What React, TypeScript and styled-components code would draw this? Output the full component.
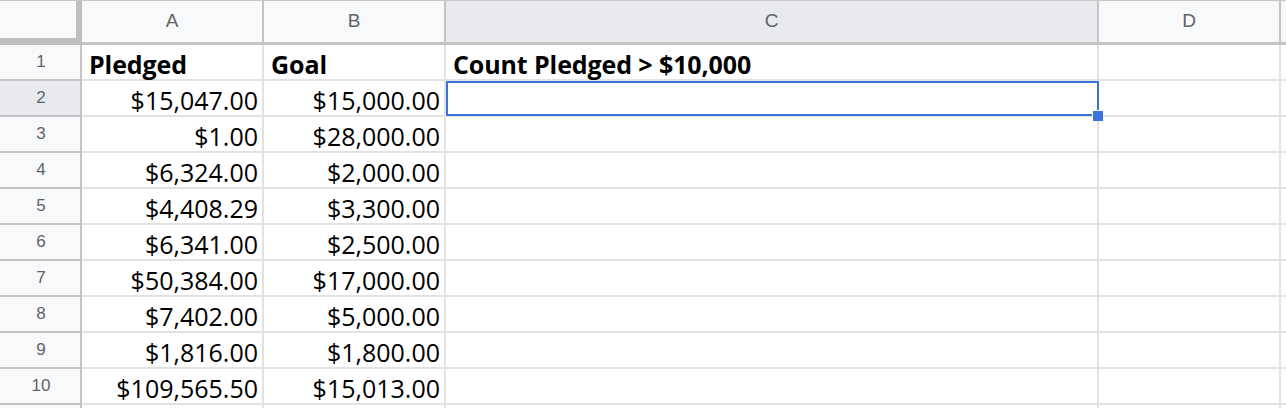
import React from "react";
import styled, { createGlobalStyle, css } from "styled-components";

const Global = createGlobalStyle`
  html, body { margin: 0; padding: 0; background: #ffffff; }
  body { width: 1286px; height: 408px; overflow: hidden; }
  * { box-sizing: border-box; }
`;

const Sheet = styled.div`
  display: grid;
  grid-template-columns: 82px 182px 182px 653px 182px 1fr;
  grid-template-rows: 44px repeat(11, 36px);
  width: 1286px;
  border-top: 1px solid #c4c7c5;
`;

const Corner = styled.div`
  background: #f8f9fa;
  border-right: 6px solid #bfbfbf;
  border-bottom: 7px solid #bfbfbf;
`;

const ColHeader = styled.div<{ $active?: boolean }>`
  display: flex;
  align-items: center;
  justify-content: center;
  padding-bottom: 1px;
  background: ${(p) => (p.$active ? "#e8eaed" : "#f8f9fa")};
  border-right: 2px solid #c4c4c4;
  border-bottom: 3px solid #c4c4c4;
  font-family: "Liberation Sans", Arial, sans-serif;
  font-size: 19px;
  color: #5f6368;
`;

const RowHeader = styled.div<{ $active?: boolean }>`
  display: flex;
  align-items: center;
  justify-content: center;
  background: ${(p) => (p.$active ? "#e8eaed" : "#f8f9fa")};
  border-right: 2px solid #c4c4c4;
  border-bottom: 2px solid #c4c4c4;
  font-family: "Liberation Sans", Arial, sans-serif;
  font-size: 17px;
  color: #5f6368;
  padding-left: 2px;
`;

const Cell = styled.div<{ $align?: "left" | "right"; $bold?: boolean }>`
  position: relative;
  display: flex;
  align-items: flex-end;
  justify-content: ${(p) => (p.$align === "right" ? "flex-end" : "flex-start")};
  padding: 0 4px 0 ${(p) => (p.$align === "right" ? "4px" : "7px")};
  border-right: 2px solid #e2e2e2;
  border-bottom: 2px solid #e2e2e2;
  font-family: "Open Sans", "Noto Sans", sans-serif;
  font-size: 25px;
  line-height: 30px;
  color: #000000;
  white-space: nowrap;
  overflow: visible;
  ${(p) =>
    p.$bold &&
    css`
      font-weight: 700;
      letter-spacing: -0.1px;
    `}
`;

const Selection = styled.div`
  position: absolute;
  z-index: 2;
  top: 0;
  left: 0;
  right: -2px;
  bottom: -1px;
  border: 2px solid #3b73dc;
  pointer-events: none;
`;

const Handle = styled.div`
  position: absolute;
  right: -6px;
  bottom: -7px;
  width: 11px;
  height: 11px;
  background: #3b73dc;
  border-left: 1px solid #ffffff;
  border-top: 1px solid #ffffff;
`;

const cols = ["A", "B", "C", "D", ""];

const data: [string, string][] = [
  ["$15,047.00", "$15,000.00"],
  ["$1.00", "$28,000.00"],
  ["$6,324.00", "$2,000.00"],
  ["$4,408.29", "$3,300.00"],
  ["$6,341.00", "$2,500.00"],
  ["$50,384.00", "$17,000.00"],
  ["$7,402.00", "$5,000.00"],
  ["$1,816.00", "$1,800.00"],
  ["$109,565.50", "$15,013.00"],
];

export default function App() {
  return (
    <>
      <Global />
      <Sheet>
        <Corner />
        {cols.map((c, i) => (
          <ColHeader key={i} $active={c === "C"}>
            {c}
          </ColHeader>
        ))}

        <RowHeader>1</RowHeader>
        <Cell $bold>Pledged</Cell>
        <Cell $bold>Goal</Cell>
        <Cell $bold>Count Pledged &gt; $10,000</Cell>
        <Cell />
        <Cell />

        {data.map(([a, b], i) => (
          <React.Fragment key={i}>
            <RowHeader $active={i === 0}>{i + 2}</RowHeader>
            <Cell $align="right">{a}</Cell>
            <Cell $align="right">{b}</Cell>
            <Cell>
              {i === 0 && (
                <Selection>
                  <Handle />
                </Selection>
              )}
            </Cell>
            <Cell />
            <Cell />
          </React.Fragment>
        ))}

        <RowHeader />
        <Cell />
        <Cell />
        <Cell />
        <Cell />
        <Cell />
      </Sheet>
    </>
  );
}
